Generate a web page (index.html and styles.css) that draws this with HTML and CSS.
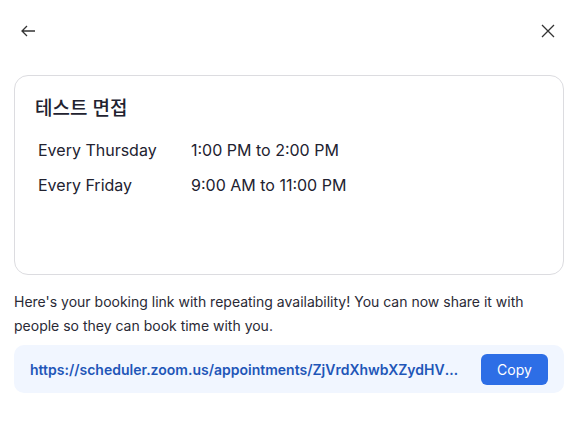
FILE: index.html
```html
<!DOCTYPE html>
<html lang="en">
<head>
<meta charset="utf-8">
<link rel="stylesheet" href="styles.css">
</head>
<body>
<div class="dialog">
  <div class="topbar">
    <button class="icon-btn" aria-label="Back">
      <svg width="16" height="16" viewBox="0 0 16 16" fill="none" stroke="#333" stroke-width="1.3"><path d="M15 8H2M7 3L2 8l5 5"/></svg>
    </button>
    <button class="icon-btn" aria-label="Close">
      <svg width="14" height="14" viewBox="0 0 14 14" fill="none" stroke="#333" stroke-width="1.3"><path d="M1 1l12 12M13 1L1 13"/></svg>
    </button>
  </div>
  <div class="card">
    <h2 class="title">테스트 면접</h2>
    <div class="schedule">
      <div class="day">Every Thursday</div><div class="time">1:00 PM to 2:00 PM</div>
      <div class="day">Every Friday</div><div class="time">9:00 AM to 11:00 PM</div>
    </div>
  </div>
  <p class="desc">Here's your booking link with repeating availability! You can now share it with people so they can book time with you.</p>
  <div class="linkbox">
    <span class="link">https://scheduler.zoom.us/appointments/ZjVrdXhwbXZydHVmdFZqcWx0bWQ</span>
    <button class="copy">Copy</button>
  </div>
</div>
</body>
</html>
```
FILE: styles.css
```css
* { box-sizing: border-box; }
html, body { margin: 0; padding: 0; background: #fff; }
body {
  font-family: Inter, "Noto Sans CJK KR", sans-serif;
  color: #222230;
  width: 586px;
}
.dialog { padding: 18px 22px 0 14px; }
.topbar {
  display: flex;
  justify-content: space-between;
  align-items: center;
  height: 26px;
  padding: 0 9px 0 6px;
}
.icon-btn {
  border: 0; background: none; padding: 0; margin: 0;
  display: flex; align-items: center; justify-content: center;
  cursor: pointer;
}
.card {
  margin-top: 31px;
  border: 1px solid #dcdce0;
  border-radius: 14px;
  height: 200px;
  padding: 21px 20px 0 20px;
}
.title {
  margin: 0;
  font-family: Inter, "Noto Sans CJK KR", sans-serif;
  font-weight: 500;
  font-size: 19px;
  line-height: 24px;
  color: #222230;
}
.schedule {
  margin-top: 17px;
  display: grid;
  grid-template-columns: 153px auto;
  row-gap: 11px;
  padding-left: 3px;
  font-size: 16px;
  line-height: 24px;
}
.desc {
  margin: 15px 0 0 0;
  font-size: 14px;
  line-height: 24px;
  color: #2a2a36;
}
.linkbox {
  margin-top: 7px;
  background: #f1f6ff;
  border-radius: 10px;
  height: 48px;
  display: flex;
  align-items: center;
  justify-content: space-between;
  padding: 0 16px 0 16px;
}
.link {
  font-size: 14px;
  font-weight: 600;
  color: #1f56b8;
  white-space: nowrap;
  overflow: hidden;
  text-overflow: ellipsis;
  max-width: 434px;
  margin-right: 12px;
}
.copy {
  flex: none;
  border: 0;
  background: #2d6ee6;
  color: #fff;
  font-family: Inter, sans-serif;
  font-size: 14px;
  width: 67px;
  height: 31px;
  border-radius: 6px;
  cursor: pointer;
}
```
